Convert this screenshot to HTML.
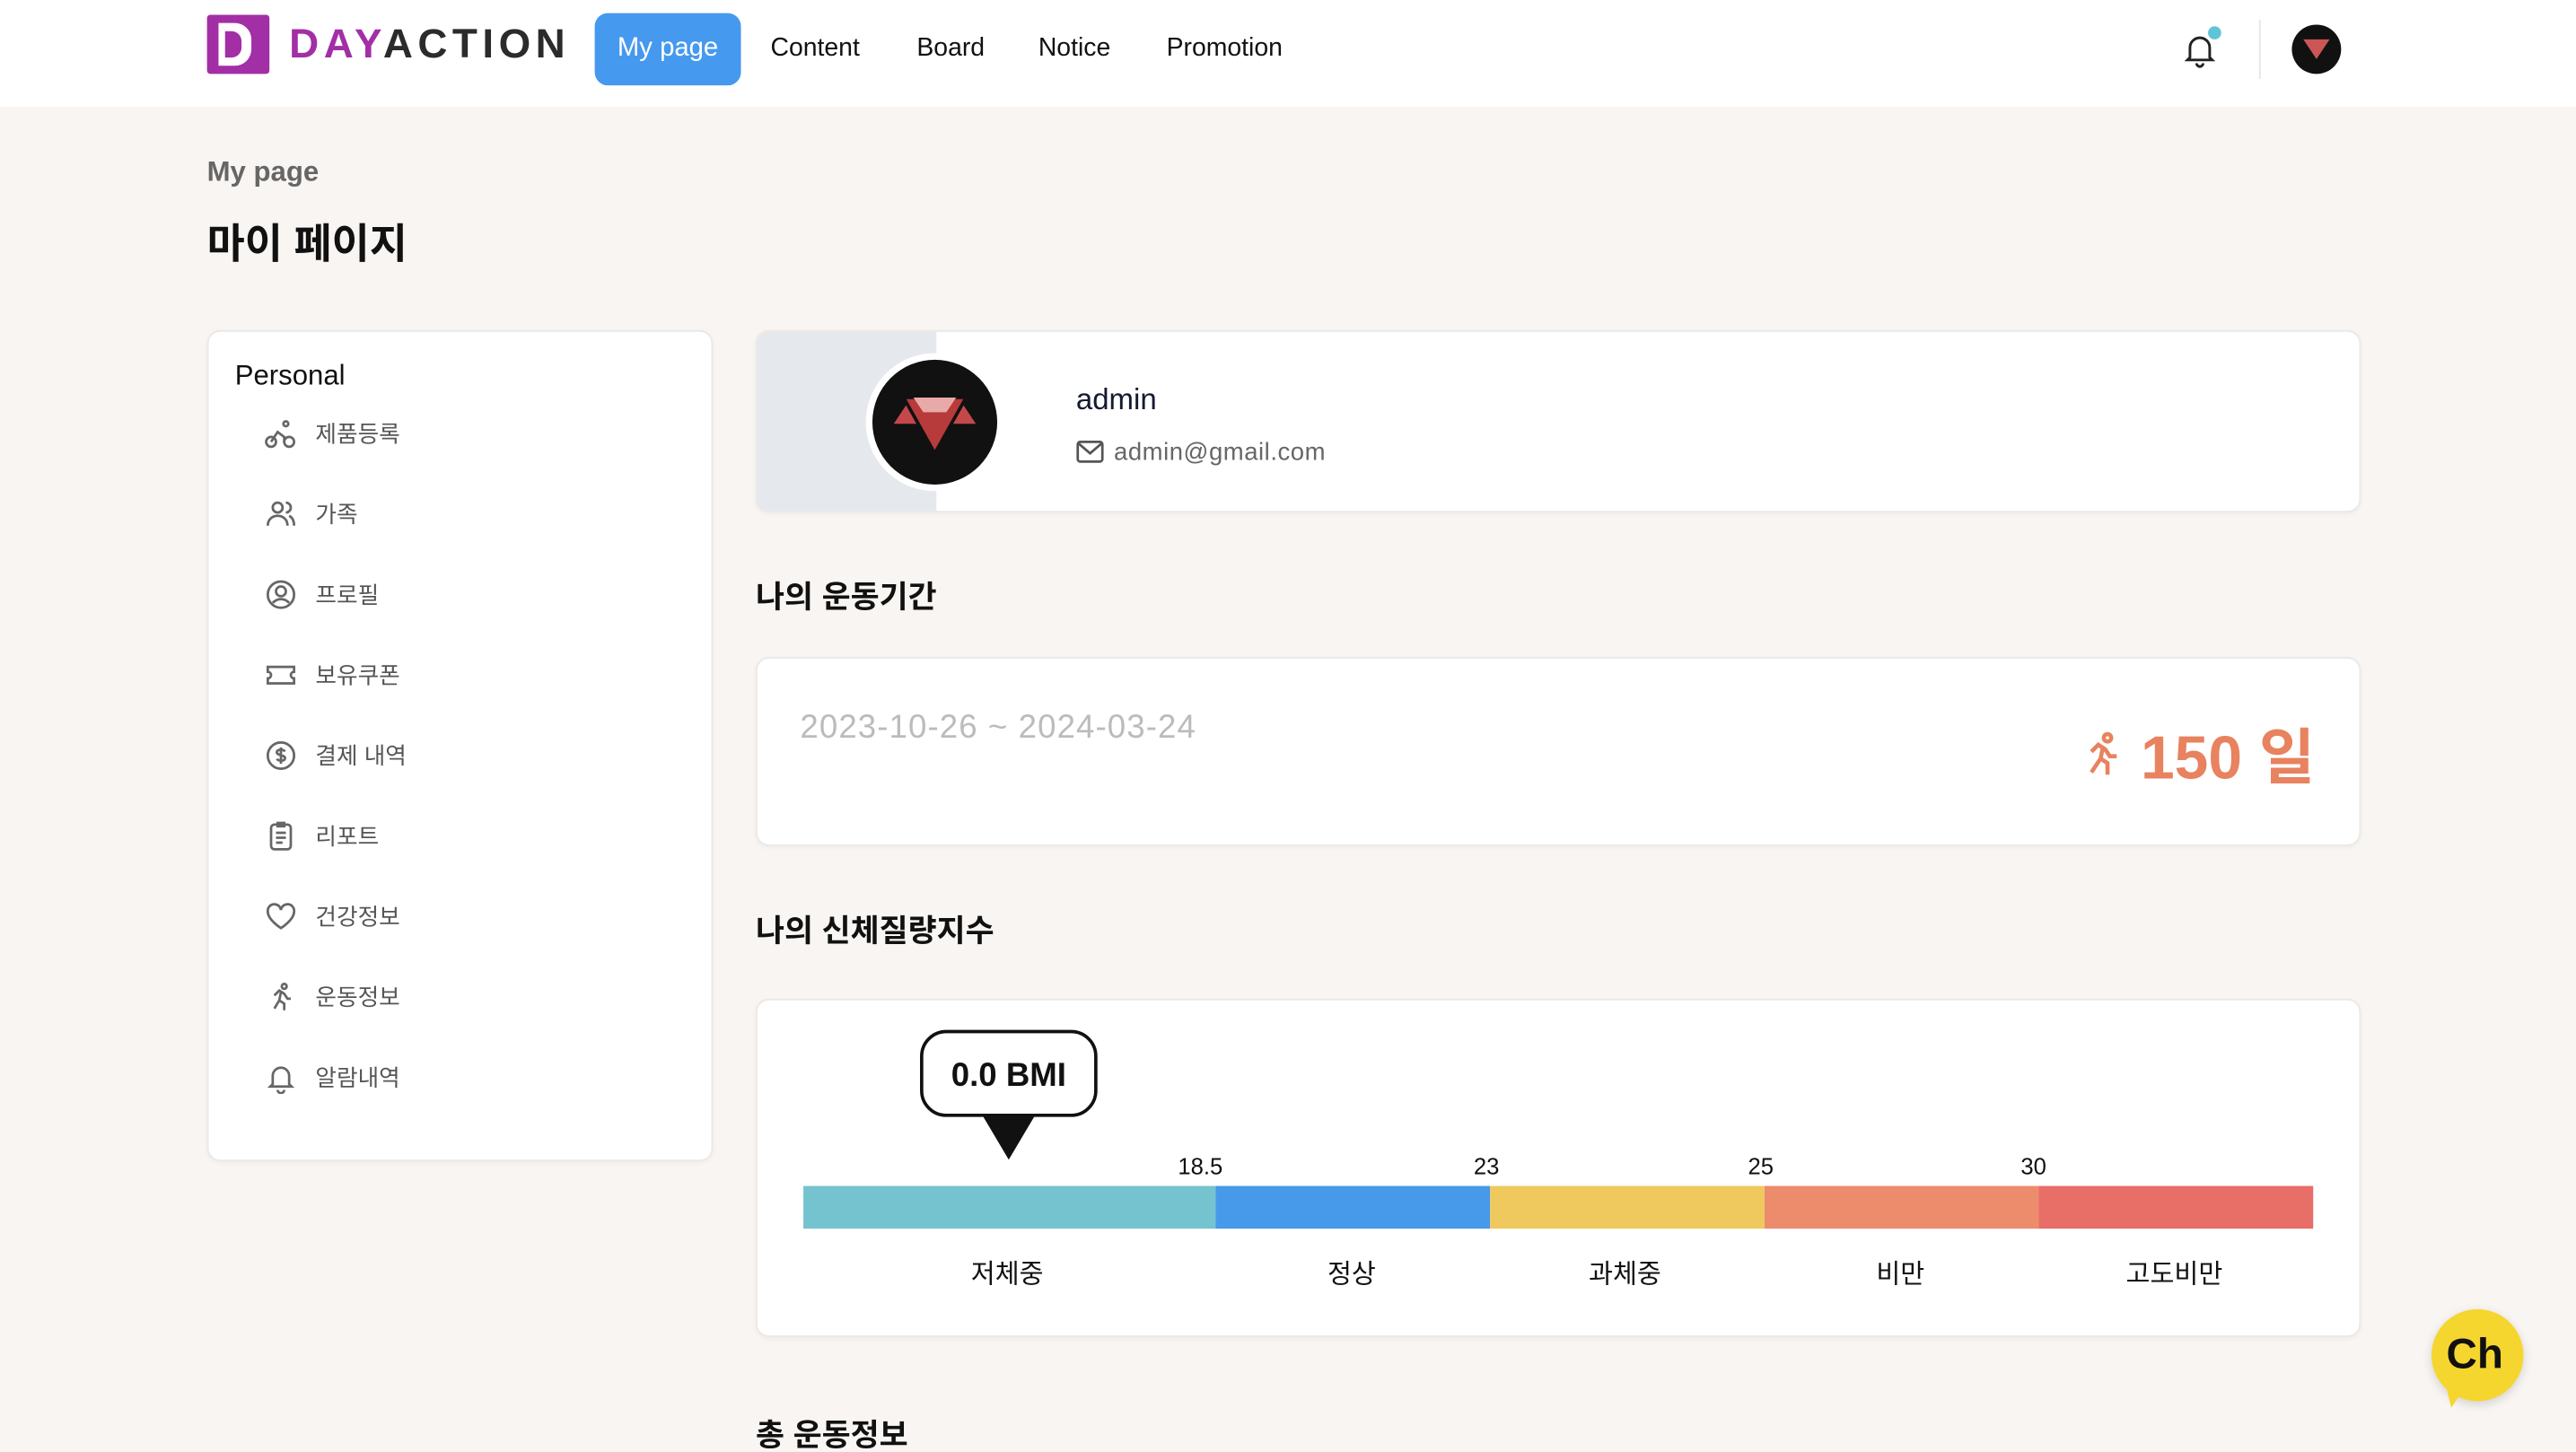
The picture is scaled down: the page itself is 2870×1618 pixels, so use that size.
<!DOCTYPE html>
<html><head><meta charset="utf-8"><style>
*{margin:0;padding:0;box-sizing:border-box}
html,body{width:2870px;height:1618px;overflow:hidden;background:#f8f5f2}
#w{width:1568px;height:884px;transform:scale(1.8304);transform-origin:0 0;position:relative;font-family:"Liberation Sans","Noto Sans CJK KR",sans-serif;color:#111}
.a{position:absolute;white-space:nowrap}
.hdr{position:absolute;left:0;top:0;width:1568px;height:65px;background:#fff}
.card{position:absolute;background:#fff;border:1px solid #ebe8e5;border-radius:8px;box-shadow:0 1px 3px rgba(0,0,0,.04)}
.it{position:absolute;left:161px;font-size:14px;color:#555;display:flex;align-items:center;gap:11px}
.it svg{width:20px;height:20px;fill:none;stroke:#666;stroke-width:1.5}
h2{position:absolute;font-size:19px;font-weight:bold;white-space:nowrap}
</style></head><body><div id="w">
<div class="hdr"></div>
<div class="a" style="left:126px;top:9px;width:38px;height:36px;background:#a22fa6;border-radius:2px"></div>
<div class="a" style="left:133px;top:14px;width:20px;height:26px;background:#fff;border-radius:0 10px 10px 0"></div>
<div class="a" style="left:137px;top:19px;width:10px;height:16px;background:#a22fa6;border-radius:0 6px 6px 0"></div>
<div class="a" style="left:176px;top:13px;font-size:25px;font-weight:bold;letter-spacing:3px"><span style="color:#a22fa6">DAY</span><span style="color:#2b2b2b">ACTION</span></div>
<div class="a" style="left:362px;top:8px;width:89px;height:44px;background:#4599ee;border-radius:8px;color:#fff;font-size:16px;text-align:center;line-height:44px">My page</div>
<div class="a" style="left:469px;top:21px;font-size:15.5px">Content</div>
<div class="a" style="left:558px;top:21px;font-size:15.5px">Board</div>
<div class="a" style="left:632px;top:21px;font-size:15.5px">Notice</div>
<div class="a" style="left:710px;top:21px;font-size:15.5px">Promotion</div>
<svg class="a" style="left:1327px;top:18px" width="24" height="24" viewBox="0 0 24 24" fill="none" stroke="#222" stroke-width="1.6"><path d="M6 17V11a6 6 0 0 1 12 0v6l1.5 1.5h-15Z M10 20.5a2 2 0 0 0 4 0"/></svg>
<div class="a" style="left:1344px;top:16px;width:8px;height:8px;border-radius:50%;background:#5ec4d6"></div>
<div class="a" style="left:1375px;top:12px;width:1px;height:36px;background:#e5e5e5"></div>
<div class="a" style="left:1395px;top:15px;width:30px;height:30px;border-radius:50%;background:#111"></div>
<svg class="a" style="left:1401px;top:21px" width="18" height="16" viewBox="0 0 18 16"><path d="M1 3h16l-8 12Z" fill="#c55"/></svg>

<div class="a" style="left:126px;top:95px;font-size:17px;color:#666;font-weight:bold">My page</div>
<div class="a" style="left:126px;top:129px;font-size:25px;font-weight:bold">마이 페이지</div>

<div class="card" style="left:126px;top:201px;width:308px;height:506px"></div>
<div class="a" style="left:143px;top:219px;font-size:17px">Personal</div>
<div class="it" style="top:254px"><svg viewBox="0 0 20 20"><circle cx="4" cy="15" r="3"/><circle cx="15" cy="15" r="3"/><circle cx="13" cy="4" r="1.5"/><path d="M4 15l4-6 4 3v3"/></svg>제품등록</div>
<div class="it" style="top:303px"><svg viewBox="0 0 20 20"><circle cx="8" cy="6" r="3"/><path d="M2 17c0-4 3-6 6-6s6 2 6 6M13 3a3 3 0 0 1 0 6M15 11c2 1 3 3 3 6"/></svg>가족</div>
<div class="it" style="top:352px"><svg viewBox="0 0 20 20"><circle cx="10" cy="10" r="8"/><circle cx="10" cy="8" r="3"/><path d="M5 15c3-3 7-3 10 0"/></svg>프로필</div>
<div class="it" style="top:401px"><svg viewBox="0 0 20 20"><path d="M2 5h16v3a2 2 0 0 0 0 4v3H2v-3a2 2 0 0 0 0-4Z"/></svg>보유쿠폰</div>
<div class="it" style="top:450px"><svg viewBox="0 0 20 20"><circle cx="10" cy="10" r="8"/><path d="M12.5 7.5c-1-1.5-5-1.5-5 .5s5 1.5 5 3.5-4 2-5 .5M10 5v10"/></svg>결제 내역</div>
<div class="it" style="top:499px"><svg viewBox="0 0 20 20"><rect x="4" y="3" width="12" height="15" rx="2"/><path d="M7 8h6M7 11h6M7 14h4M8 2h4v2H8z"/></svg>리포트</div>
<div class="it" style="top:548px"><svg viewBox="0 0 20 20"><path d="M10 17S2 12 2 7a4 4 0 0 1 8-1 4 4 0 0 1 8 1c0 5-8 10-8 10Z"/></svg>건강정보</div>
<div class="it" style="top:597px"><svg viewBox="0 0 20 20"><circle cx="12" cy="3.5" r="1.5"/><path d="M6 9l3-3 3 2 2 3h2M10 7l-1 5 3 2v4M9 12l-3 5"/></svg>운동정보</div>
<div class="it" style="top:646px"><svg viewBox="0 0 20 20"><path d="M5 14V9a5 5 0 0 1 10 0v5l1.5 1.5h-13ZM8 17.5a2 2 0 0 0 4 0"/></svg>알람내역</div>

<div class="card" style="left:460px;top:201px;width:977px;height:111px;overflow:hidden"><div style="position:absolute;left:0;top:0;width:109px;height:111px;background:#e5e8ed"></div></div>
<div class="a" style="left:527px;top:215px;width:84px;height:84px;border-radius:50%;background:#fff"></div>
<div class="a" style="left:531px;top:219px;width:76px;height:76px;border-radius:50%;background:#111"></div>
<svg class="a" style="left:542px;top:238px" width="54" height="40" viewBox="0 0 54 40"><path d="M2 20l8-12 8 12ZM36 20l8-12 8 12Z" fill="#c4484a"/><path d="M8 4h38L27 38Z" fill="#b73b3b" stroke="#111" stroke-width="2"/><path d="M14 4h26l-6 9H20Z" fill="#e8aaa8"/></svg>
<div class="a" style="left:655px;top:233px;font-size:18px;color:#141a2e">admin</div>
<svg class="a" style="left:655px;top:268px" width="17" height="15" viewBox="0 0 17 15" fill="none" stroke="#555" stroke-width="1.5"><rect x="1" y="1" width="15" height="12" rx="1.5"/><path d="M1.5 2l7 6 7-6"/></svg>
<div class="a" style="left:678px;top:267px;font-size:15px;color:#666;letter-spacing:.3px">admin@gmail.com</div>

<h2 style="left:460px;top:349px">나의 운동기간</h2>
<div class="card" style="left:460px;top:400px;width:977px;height:115px"></div>
<div class="a" style="left:487px;top:432px;font-size:20px;color:#bbb;letter-spacing:.6px">2023-10-26 ~ 2024-03-24</div>
<svg class="a" style="left:1266px;top:444px" width="28" height="30" viewBox="0 0 20 20" fill="none" stroke="#e8825f" stroke-width="1.8"><circle cx="12" cy="3" r="1.6"/><path d="M5 9l3-3 3 2 2 3h3M10 7l-1 5 3 2v5M9 12l-4 6"/></svg>
<div class="a" style="left:1303px;top:431px;font-size:37px;font-weight:bold;color:#e8825f">150 일</div>

<h2 style="left:460px;top:552px">나의 신체질량지수</h2>
<div class="card" style="left:460px;top:608px;width:977px;height:206px"></div>
<div class="a" style="left:560px;top:627px;width:108px;height:53px;border:2px solid #111;border-radius:16px;background:#fff;font-size:20px;font-weight:bold;text-align:center;line-height:53px">0.0 BMI</div>
<svg class="a" style="left:598px;top:679px" width="32" height="28" viewBox="0 0 32 28"><path d="M0 0h32L16 27Z" fill="#111"/></svg>
<div class="a" style="left:489px;top:722px;width:251px;height:26px;background:#76c3d0"></div>
<div class="a" style="left:740px;top:722px;width:167px;height:26px;background:#4799e9"></div>
<div class="a" style="left:907px;top:722px;width:167px;height:26px;background:#efc95e"></div>
<div class="a" style="left:1074px;top:722px;width:167px;height:26px;background:#ec8c6c"></div>
<div class="a" style="left:1241px;top:722px;width:167px;height:26px;background:#e86e68"></div>
<div class="a" style="left:717px;top:702px;font-size:14px">18.5</div>
<div class="a" style="left:897px;top:702px;font-size:14px">23</div>
<div class="a" style="left:1064px;top:702px;font-size:14px">25</div>
<div class="a" style="left:1230px;top:702px;font-size:14px">30</div>
<div class="a" style="left:591px;top:762px;font-size:16px">저체중</div>
<div class="a" style="left:808px;top:762px;font-size:16px">정상</div>
<div class="a" style="left:967px;top:762px;font-size:16px">과체중</div>
<div class="a" style="left:1142px;top:762px;font-size:16px">비만</div>
<div class="a" style="left:1294px;top:762px;font-size:16px">고도비만</div>

<h2 style="left:460px;top:859px">총 운동정보</h2>
<div class="a" style="left:1480px;top:797px;width:56px;height:56px;border-radius:50%;background:#f5d62e;box-shadow:0 2px 6px rgba(0,0,0,.15)"></div>
<svg class="a" style="left:1488px;top:840px" width="16" height="18" viewBox="0 0 16 18"><path d="M0 0h16L4 17Z" fill="#f5d62e"/></svg>
<div class="a" style="left:1489px;top:809px;font-size:26px;font-weight:bold;color:#111">Ch</div>
</div></body></html>
